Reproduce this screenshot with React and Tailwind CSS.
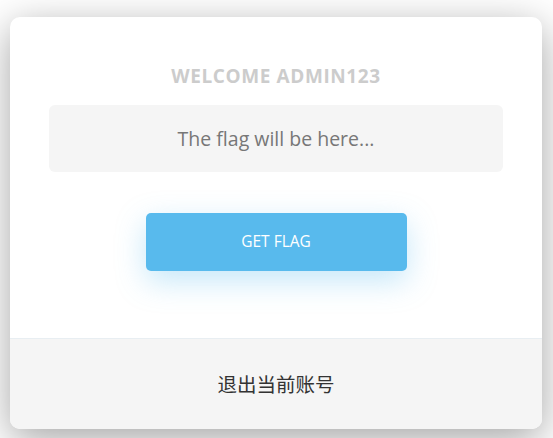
export default function App() {
  return (
    <div className="min-h-screen bg-white pt-[17px] px-[10px] font-['Open_Sans','Noto_Sans_CJK_SC',sans-serif]">
      <div className="w-[532px] h-[412px] bg-white rounded-[10px] overflow-hidden flex flex-col shadow-[0_10px_40px_rgba(0,0,0,0.36)]">
        <div className="flex-1 flex flex-col items-center pt-[50px]">
          <h1 className="text-[19px] font-bold text-[#cccccc] tracking-[0.6px] leading-none">WELCOME ADMIN123</h1>
          <div className="mt-[19px] w-[454px] h-[67px] bg-[#f5f5f5] rounded-[6px] flex items-center justify-center">
            <span className="text-[19.5px] text-[#777777]">The flag will be here...</span>
          </div>
          <button
            type="button"
            className="mt-[41px] w-[261px] h-[58px] bg-[#58baed] rounded-[5px] text-white text-[15.5px] shadow-[0_10px_30px_rgba(88,186,237,0.35)]"
          >
            GET FLAG
          </button>
        </div>
        <div className="h-[91px] shrink-0 bg-[#f5f5f5] border-t border-[#e8eef2] flex items-center justify-center">
          <span className="text-[19.5px] text-[#333333] font-['Noto_Sans_CJK_SC',sans-serif]">退出当前账号</span>
        </div>
      </div>
    </div>
  );
}
